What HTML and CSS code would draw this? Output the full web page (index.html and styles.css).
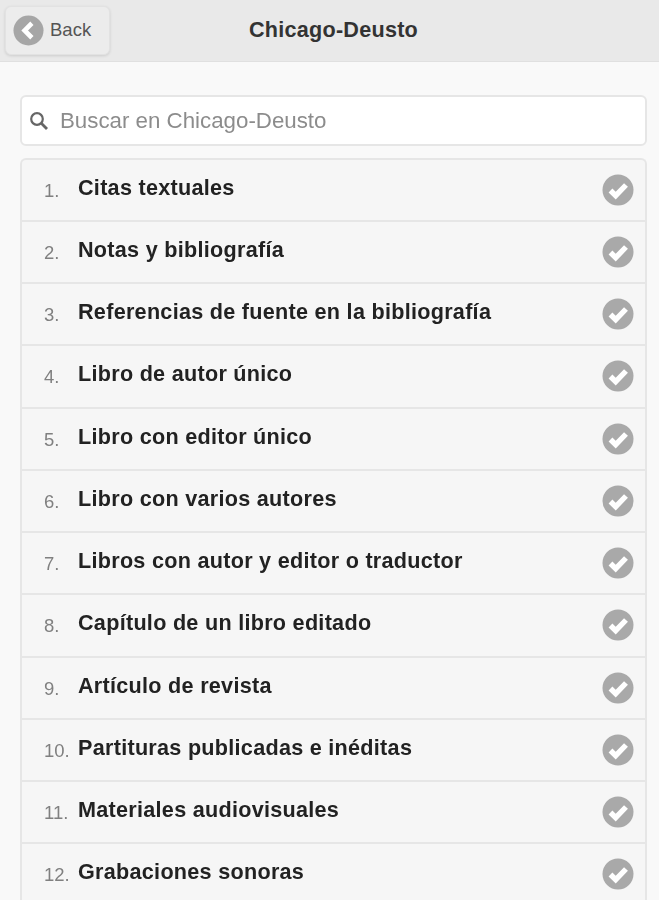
FILE: index.html
```html
<!DOCTYPE html>
<html lang="es">
<head>
<meta charset="utf-8">
<title>Chicago-Deusto</title>
<link rel="stylesheet" href="styles.css">
</head>
<body>
<svg class="defs" width="0" height="0" aria-hidden="true">
  <symbol id="check" viewBox="0 0 32 32">
    <circle cx="16" cy="16" r="15.5" fill="#a9a9a9"/>
    <path d="M8.5 16.5l5.2 5.2L24 11" fill="none" stroke="#fff" stroke-width="5.4"/>
  </symbol>
</svg>
<header class="bar">
  <a class="back">
    <svg class="back-icon" viewBox="0 0 32 32" aria-hidden="true">
      <circle cx="16" cy="16" r="15.5" fill="#a6a6a6"/>
      <path d="M19.5 8.5L12 16l7.5 7.5" fill="none" stroke="#fff" stroke-width="4.8"/>
    </svg>
    <span>Back</span>
  </a>
  <h1 class="title">Chicago-Deusto</h1>
</header>
<main class="content">
  <div class="search">
    <svg class="search-icon" viewBox="0 0 20 20" aria-hidden="true">
      <circle cx="8" cy="8" r="5.8" fill="none" stroke="#666" stroke-width="2.2"/>
      <path d="M12.3 12.3L18 18" fill="none" stroke="#666" stroke-width="2.8"/>
    </svg>
    <span class="placeholder">Buscar en Chicago-Deusto</span>
  </div>
  <ol class="list">
    <li class="row"><span class="num">1.</span><span class="label">Citas textuales</span><svg class="check"><use href="#check"/></svg></li>
    <li class="row"><span class="num">2.</span><span class="label">Notas y bibliografía</span><svg class="check"><use href="#check"/></svg></li>
    <li class="row"><span class="num">3.</span><span class="label">Referencias de fuente en la bibliografía</span><svg class="check"><use href="#check"/></svg></li>
    <li class="row"><span class="num">4.</span><span class="label">Libro de autor único</span><svg class="check"><use href="#check"/></svg></li>
    <li class="row"><span class="num">5.</span><span class="label">Libro con editor único</span><svg class="check"><use href="#check"/></svg></li>
    <li class="row"><span class="num">6.</span><span class="label">Libro con varios autores</span><svg class="check"><use href="#check"/></svg></li>
    <li class="row"><span class="num">7.</span><span class="label">Libros con autor y editor o traductor</span><svg class="check"><use href="#check"/></svg></li>
    <li class="row"><span class="num">8.</span><span class="label">Capítulo de un libro editado</span><svg class="check"><use href="#check"/></svg></li>
    <li class="row"><span class="num">9.</span><span class="label">Artículo de revista</span><svg class="check"><use href="#check"/></svg></li>
    <li class="row"><span class="num">10.</span><span class="label">Partituras publicadas e inéditas</span><svg class="check"><use href="#check"/></svg></li>
    <li class="row"><span class="num">11.</span><span class="label">Materiales audiovisuales</span><svg class="check"><use href="#check"/></svg></li>
    <li class="row"><span class="num">12.</span><span class="label">Grabaciones sonoras</span><svg class="check"><use href="#check"/></svg></li>
  </ol>
</main>
</body>
</html>
```
FILE: styles.css
```css
* { box-sizing: border-box; }
html, body { height: 100%; }
body {
  margin: 0;
  height: 900px;
  overflow: hidden;
  background: #f9f9f9;
  font-family: "Liberation Sans", Arial, sans-serif;
  color: #222;
  filter: blur(.4px);
}
.defs { display: block; height: 0; }
.bar {
  position: relative;
  height: 62px;
  background: #e9e9e9;
  border-bottom: 1px solid #e0e0e0;
  display: flex;
  align-items: center;
  justify-content: center;
}
.back {
  position: absolute;
  left: 5px;
  top: 6px;
  width: 105px;
  height: 49px;
  display: flex;
  align-items: center;
  gap: 6px;
  padding-left: 7px;
  background: #ececec;
  border: 1px solid #e2e2e2;
  border-radius: 6px;
  box-shadow: 0 1px 3px rgba(0,0,0,.12);
  font-size: 18.5px;
  color: #555;
}
.back-icon { width: 31px; height: 31px; flex: none; }
.back span { padding-bottom: 2px; }
.title {
  margin: 0 0 1px 8px;
  font-size: 21.6px;
  font-weight: bold;
  color: #333;
  letter-spacing: .25px;
}
.content { padding: 33px 12px 0 20px; }
.search {
  height: 51px;
  display: flex;
  align-items: center;
  gap: 11px;
  padding-left: 7px;
  background: #fff;
  border: 2px solid #e6e6e6;
  border-radius: 6px;
}
.search-icon { width: 20px; height: 20px; flex: none; }
.placeholder { font-size: 22.3px; color: #8c8c8c; }
.list {
  margin: 11.5px 0 0;
  padding: 0;
  list-style: none;
  background: #f6f6f6;
  border: 2px solid #e6e6e6;
  border-bottom: 0;
  border-radius: 6px 6px 0 0;
}
.row {
  height: 62.25px;
  display: flex;
  align-items: center;
  padding: 0 11px 0 22px;
  border-bottom: 2px solid #e6e6e6;
}
.num {
  width: 34px;
  flex: none;
  font-size: 18.5px;
  color: #808080;
  padding-top: 2px;
}
.label {
  flex: 1;
  font-size: 21.6px;
  font-weight: bold;
  color: #222;
  letter-spacing: .28px;
  padding-bottom: 4px;
}
.check { width: 32px; height: 32px; flex: none; }
```
